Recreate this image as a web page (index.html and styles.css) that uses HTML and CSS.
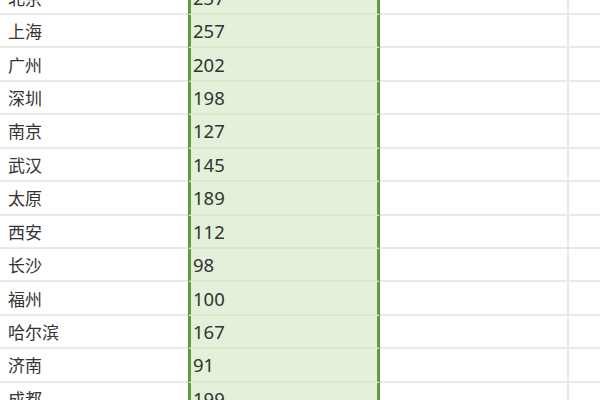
FILE: index.html
```html
<!DOCTYPE html>
<html lang="zh-CN">
<head>
<meta charset="utf-8">
<link rel="stylesheet" href="styles.css">
</head>
<body>
<div class="sheet">
  <div class="cell name">北京</div><div class="cell num sel">237</div><div class="cell"></div><div class="cell last"></div>
  <div class="cell name">上海</div><div class="cell num sel">257</div><div class="cell"></div><div class="cell last"></div>
  <div class="cell name">广州</div><div class="cell num sel">202</div><div class="cell"></div><div class="cell last"></div>
  <div class="cell name">深圳</div><div class="cell num sel">198</div><div class="cell"></div><div class="cell last"></div>
  <div class="cell name">南京</div><div class="cell num sel">127</div><div class="cell"></div><div class="cell last"></div>
  <div class="cell name">武汉</div><div class="cell num sel">145</div><div class="cell"></div><div class="cell last"></div>
  <div class="cell name">太原</div><div class="cell num sel">189</div><div class="cell"></div><div class="cell last"></div>
  <div class="cell name">西安</div><div class="cell num sel">112</div><div class="cell"></div><div class="cell last"></div>
  <div class="cell name">长沙</div><div class="cell num sel">98</div><div class="cell"></div><div class="cell last"></div>
  <div class="cell name">福州</div><div class="cell num sel">100</div><div class="cell"></div><div class="cell last"></div>
  <div class="cell name">哈尔滨</div><div class="cell num sel">167</div><div class="cell"></div><div class="cell last"></div>
  <div class="cell name">济南</div><div class="cell num sel">91</div><div class="cell"></div><div class="cell last"></div>
  <div class="cell name">成都</div><div class="cell num sel">199</div><div class="cell"></div><div class="cell last"></div>
</div>
</body>
</html>
```

FILE: styles.css
```css
html, body {
  margin: 0;
  padding: 0;
  background: #ffffff;
  overflow: hidden;
  width: 600px;
  height: 400px;
}

.sheet {
  display: grid;
  grid-template-columns: 188px 192px 189px 40px;
  grid-auto-rows: 33.43px;
  margin-top: -18.43px;
  color: #333333;
}

.cell {
  box-sizing: border-box;
  border-bottom: 2px solid #e9e9e9;
  border-right: 2px solid #e9e9e9;
  display: flex;
  align-items: center;
  white-space: nowrap;
  overflow: hidden;
}

.cell.last {
  border-right: none;
}

.name {
  padding-left: 8px;
  border-right: none;
  font-family: "Noto Sans CJK SC", sans-serif;
  font-size: 17px;
}

.num {
  padding-left: 2px;
  font-family: "Noto Sans", "Liberation Sans", sans-serif;
  font-size: 18.5px;
}

.sel {
  background: #e3f1da;
  border-left: 3px solid #5e9c42;
  border-right: 3px solid #5e9c42;
  border-bottom: 2px solid #d7e8cc;
}
```
